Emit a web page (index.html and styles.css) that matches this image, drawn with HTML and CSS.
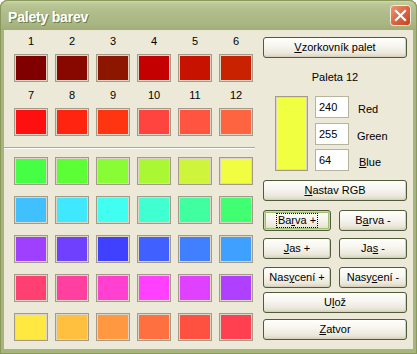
FILE: index.html
```html
<!DOCTYPE html>
<html lang="cs">
<head>
<meta charset="utf-8">
<title>Palety barev</title>
<link rel="stylesheet" href="styles.css">
</head>
<body>
<div class="window">
  <div class="titlebar">
    <span class="title">Palety barev</span>
    <div class="close">
      <svg width="21" height="21" viewBox="0 0 21 21">
        <defs>
          <linearGradient id="cg" x1="0" y1="0" x2="1" y2="1">
            <stop offset="0" stop-color="#ec9a7c"/>
            <stop offset="0.45" stop-color="#dd6a46"/>
            <stop offset="1" stop-color="#c5401c"/>
          </linearGradient>
        </defs>
        <rect x="0.5" y="0.5" width="20" height="20" rx="3" fill="url(#cg)" stroke="#f4efe6"/>
        <path d="M6 6 L15 15 M15 6 L6 15" stroke="#fff" stroke-width="2.2" stroke-linecap="square"/>
      </svg>
    </div>
  </div>
  <div class="client">
    <div class="left">
      <div class="grid top">
        <span class="num">1</span><span class="num">2</span><span class="num">3</span><span class="num">4</span><span class="num">5</span><span class="num">6</span>
        <span class="sw c1"></span><span class="sw c2"></span><span class="sw c3"></span><span class="sw c4"></span><span class="sw c5"></span><span class="sw c6"></span>
        <span class="num">7</span><span class="num">8</span><span class="num">9</span><span class="num">10</span><span class="num">11</span><span class="num">12</span>
        <span class="sw c7"></span><span class="sw c8"></span><span class="sw c9"></span><span class="sw c10"></span><span class="sw c11"></span><span class="sw c12"></span>
      </div>
      <div class="sep"></div>
      <div class="grid bottom">
        <span class="sw g1"></span><span class="sw g2"></span><span class="sw g3"></span><span class="sw g4"></span><span class="sw g5"></span><span class="sw g6"></span>
        <span class="sw b1"></span><span class="sw b2"></span><span class="sw b3"></span><span class="sw b4"></span><span class="sw b5"></span><span class="sw b6"></span>
        <span class="sw v1"></span><span class="sw v2"></span><span class="sw v3"></span><span class="sw v4"></span><span class="sw v5"></span><span class="sw v6"></span>
        <span class="sw p1"></span><span class="sw p2"></span><span class="sw p3"></span><span class="sw p4"></span><span class="sw p5"></span><span class="sw p6"></span>
        <span class="sw y1"></span><span class="sw y2"></span><span class="sw y3"></span><span class="sw y4"></span><span class="sw y5"></span><span class="sw y6"></span>
      </div>
    </div>
    <div class="right">
      <div class="btn full first"><span><u>V</u>zorkovník palet</span></div>
      <div class="caption">Paleta 12</div>
      <div class="rgb">
        <div class="preview"></div>
        <div class="inputs">
          <div class="field">240</div>
          <div class="field">255</div>
          <div class="field">64</div>
        </div>
        <div class="labels">
          <div class="lbl">Red</div>
          <div class="lbl green">Green</div>
          <div class="lbl blue"><u>B</u>lue</div>
        </div>
      </div>
      <div class="btn full nastav"><span><u>N</u>astav RGB</span></div>
      <div class="pair barva">
        <div class="btn default"><span class="focus">Ba<u>r</u>va +</span></div>
        <div class="btn"><span>B<u>a</u>rva -</span></div>
      </div>
      <div class="pair jas">
        <div class="btn"><span><u>J</u>as +</span></div>
        <div class="btn"><span>Ja<u>s</u> -</span></div>
      </div>
      <div class="pair nasyc">
        <div class="btn"><span>Nas<u>y</u>cení +</span></div>
        <div class="btn"><span>Nasy<u>c</u>ení -</span></div>
      </div>
      <div class="btn full uloz"><span>U<u>l</u>ož</span></div>
      <div class="btn full zatvor"><span><u>Z</u>atvor</span></div>
    </div>
  </div>
</div>
</body>
</html>
```

FILE: styles.css
```css
html, body {
  margin: 0;
  padding: 0;
  background: #ffffff;
}

.window {
  width: 417px;
  height: 354px;
  box-sizing: border-box;
  background: #a7b47b;
  border-radius: 8px 8px 0 0;
  display: flex;
  flex-direction: column;
  box-shadow: inset 0 0 0 1px #8a985c;
  font-family: "Liberation Sans", Arial, sans-serif;
  font-size: 11px;
  color: #000;
}

.titlebar {
  height: 30px;
  flex: none;
  border-radius: 8px 8px 0 0;
  background: linear-gradient(#dfe6c6 0px, #c6d0a2 2px, #b8c594 5px, #afbc89 14px, #a9b683 24px, #a0ad75 30px);
  display: flex;
  align-items: center;
  padding: 0 6px 0 8px;
  box-sizing: border-box;
  box-shadow: inset 1px 0 0 #8a985c, inset -1px 0 0 #8a985c, inset 0 1px 0 #8a985c;
}

.title {
  flex: 1;
  color: #ffffff;
  font-weight: bold;
  font-size: 14px;
  letter-spacing: -0.2px;
  padding-top: 3px;
  text-shadow: 1px 1px 0 #6e7c48;
}

.close {
  width: 21px;
  height: 21px;
  margin-top: 1px;
}

.close svg {
  display: block;
}

.client {
  flex: 1;
  margin: 0 4px 5px 4px;
  background: #ece9d8;
  display: flex;
}

.left {
  width: 251px;
  flex: none;
  display: flex;
  flex-direction: column;
}

.grid {
  display: grid;
  grid-template-columns: repeat(6, 34px);
  column-gap: 7px;
  padding-left: 10px;
}

.grid.top {
  padding-top: 4px;
  grid-template-rows: 14px 28px 14px 28px;
  row-gap: 6px;
}

.grid.bottom {
  margin-top: 8px;
  grid-auto-rows: 28px;
  row-gap: 11px;
}

.num {
  text-align: center;
  line-height: 14px;
}

.sw {
  display: block;
  box-sizing: border-box;
  border: 1px solid #a39b88;
  box-shadow: inset 0 0 0 1px #ddd6c6;
}

.sep {
  margin-top: 11px;
  height: 1px;
  border-top: 1px solid #aca899;
  border-bottom: 1px solid #ffffff;
  height: 0;
}

.c1 { background: #800000; }
.c2 { background: #880800; }
.c3 { background: #8c1600; }
.c4 { background: #c40000; }
.c5 { background: #c81200; }
.c6 { background: #c82200; }
.c7 { background: #ff1010; }
.c8 { background: #ff2410; }
.c9 { background: #ff3410; }
.c10 { background: #ff4440; }
.c11 { background: #ff5440; }
.c12 { background: #ff6440; }

.g1 { background: #44ff44; }
.g2 { background: #5cff36; }
.g3 { background: #88fc34; }
.g4 { background: #aaf834; }
.g5 { background: #cef53c; }
.g6 { background: #f0fd40; }

.b1 { background: #40c0ff; }
.b2 { background: #40e8ff; }
.b3 { background: #40fff0; }
.b4 { background: #40ffd0; }
.b5 { background: #40ffa0; }
.b6 { background: #40ff70; }

.v1 { background: #a040ff; }
.v2 { background: #7040ff; }
.v3 { background: #4040ff; }
.v4 { background: #4060ff; }
.v5 { background: #4080ff; }
.v6 { background: #40a0ff; }

.p1 { background: #ff4070; }
.p2 { background: #ff40a0; }
.p3 { background: #ff40d0; }
.p4 { background: #ff40ff; }
.p5 { background: #e040ff; }
.p6 { background: #b040ff; }

.y1 { background: #ffe840; }
.y2 { background: #ffc040; }
.y3 { background: #ff9840; }
.y4 { background: #ff7040; }
.y5 { background: #ff5040; }
.y6 { background: #ff4050; }

.right {
  width: 144px;
  margin-left: 8px;
  display: flex;
  flex-direction: column;
}

.btn {
  height: 21px;
  box-sizing: border-box;
  border: 1px solid #4f5b3a;
  border-radius: 3px;
  background: linear-gradient(#fffffc 0%, #f6f5ee 45%, #ebe8da 80%, #d9d3c0 100%);
  box-shadow: inset -1px -1px 0 #d6d0bc;
  display: flex;
  align-items: center;
  justify-content: center;
  line-height: 13px;
  white-space: nowrap;
}

.btn.default {
  box-shadow: inset 0 0 0 1px #c8dca0, inset 0 0 0 2px #a3c073;
}

.focus {
  outline: 1px dotted #000;
  outline-offset: 0px;
  padding: 0 1px;
}

.first { margin-top: 7px; }

.caption {
  margin-top: 12px;
  text-align: center;
  line-height: 14px;
}

.rgb {
  margin-top: 12px;
  height: 75px;
  display: flex;
}

.preview {
  width: 33px;
  margin-left: 12px;
  box-sizing: border-box;
  background: #f0ff40;
  border: 1px solid #a39b88;
  box-shadow: inset 0 0 0 1px #ddd6c6;
}

.inputs {
  width: 34px;
  margin-left: 7px;
  display: flex;
  flex-direction: column;
  justify-content: space-between;
}

.field {
  height: 22px;
  box-sizing: border-box;
  background: #ffffff;
  border: 1px solid #b6b39f;
  padding-left: 3px;
  line-height: 20px;
}

.labels {
  margin-left: 8px;
  display: flex;
  flex-direction: column;
  justify-content: space-between;
}

.lbl {
  height: 22px;
  box-sizing: border-box;
  padding-top: 7px;
  line-height: 13px;
  padding-left: 1px;
}

.lbl.green { padding-left: 0; }
.lbl.blue { padding-left: 2px; }

.nastav { margin-top: 9px; }

.pair {
  display: flex;
  justify-content: space-between;
}

.pair .btn { width: 68px; }

.barva { margin-top: 9px; }
.jas { margin-top: 7px; }
.nasyc { margin-top: 8px; }
.uloz { margin-top: 4px; }
.zatvor { margin-top: 6px; }
```
